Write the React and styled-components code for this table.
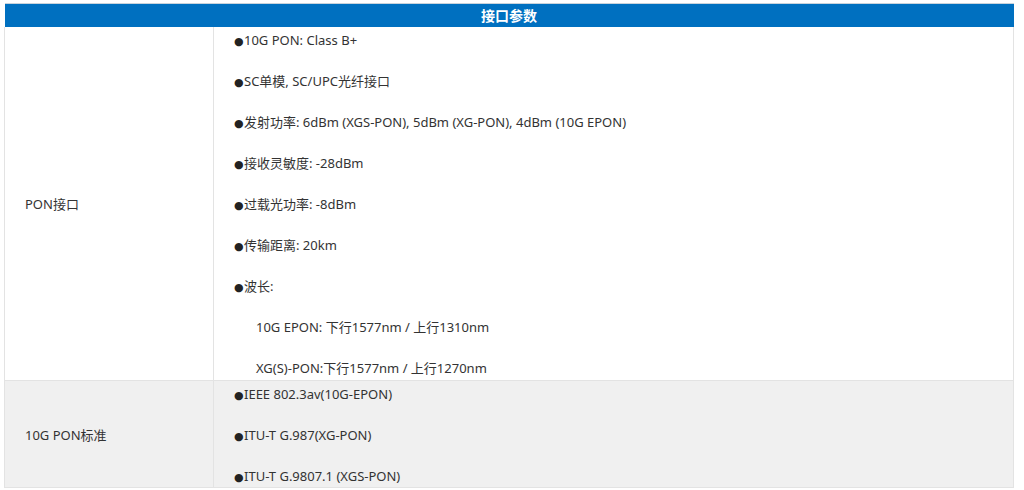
import React from "react";
import styled, { createGlobalStyle } from "styled-components";

const Global = createGlobalStyle`
  html, body { margin: 0; padding: 0; background: #fff; }
  body { font-family: "Noto Sans", "Noto Sans CJK SC", sans-serif; color: #333; }
`;

const Wrap = styled.div`
  padding: 3px 0 0 4px;
  width: 1010px;
`;

const Table = styled.table`
  width: 1010px;
  border-collapse: collapse;
  border-top: 1px solid #c8d3dc;
  table-layout: fixed;
  font-size: 13px;
`;

const LabelCol = styled.col`
  width: 209px;
`;

const HeadCell = styled.th`
  background: #0070c0;
  color: #fff;
  font-weight: bold;
  font-size: 14px;
  height: 23px;
  padding: 0;
  line-height: 23px;
  text-align: center;
`;

const Row = styled.tr`
  background: ${(p) => (p.$alt ? "#f0f0f0" : "#fff")};
`;

const LabelCell = styled.td`
  padding: 0 20px;
  vertical-align: middle;
  border: 1px solid #e3e3e3;
  border-top: none;
`;

const ValueCell = styled.td`
  padding: 3px 20px ${(p) => (p.$alt ? "1px" : "2px")};
  vertical-align: top;
  border: 1px solid #e3e3e3;
  border-top: none;
`;

const Lines = styled.div`
  display: flex;
  flex-direction: column;
  gap: 21px;
`;

const Line = styled.p`
  margin: 0;
  height: 20px;
  line-height: 20px;
  padding-left: ${(p) => (p.$indent ? "22px" : "0")};
  white-space: nowrap;
`;

const Bullet = styled.span`
  display: inline-block;
  width: 10px;
  line-height: 0;
  font-family: "DejaVu Sans", sans-serif;
  font-size: 11px;
  color: #222;
  text-align: left;
`;

const rows = [
  {
    label: "PON接口",
    lines: [
      "10G PON: Class B+",
      "SC单模, SC/UPC光纤接口",
      "发射功率: 6dBm (XGS-PON), 5dBm (XG-PON), 4dBm (10G EPON)",
      "接收灵敏度: -28dBm",
      "过载光功率: -8dBm",
      "传输距离: 20km",
      "波长:",
      ["10G EPON: 下行1577nm / 上行1310nm", true],
      ["XG(S)-PON:下行1577nm / 上行1270nm", true],
    ],
  },
  {
    label: "10G PON标准",
    alt: true,
    lines: [
      "IEEE 802.3av(10G-EPON)",
      "ITU-T G.987(XG-PON)",
      "ITU-T G.9807.1 (XGS-PON)",
    ],
  },
];

export default function App() {
  return (
    <>
      <Global />
      <Wrap>
        <Table>
          <colgroup>
            <LabelCol />
            <col />
          </colgroup>
          <thead>
            <tr>
              <HeadCell colSpan={2}>接口参数</HeadCell>
            </tr>
          </thead>
          <tbody>
            {rows.map((r) => (
              <Row key={r.label} $alt={r.alt}>
                <LabelCell>{r.label}</LabelCell>
                <ValueCell $alt={r.alt}>
                  <Lines>
                    {r.lines.map((l) => {
                      const [text, indent] = Array.isArray(l) ? l : [l, false];
                      return (
                        <Line key={text} $indent={indent}>
                          {!indent && <Bullet>●</Bullet>}
                          {text}
                        </Line>
                      );
                    })}
                  </Lines>
                </ValueCell>
              </Row>
            ))}
          </tbody>
        </Table>
      </Wrap>
    </>
  );
}
